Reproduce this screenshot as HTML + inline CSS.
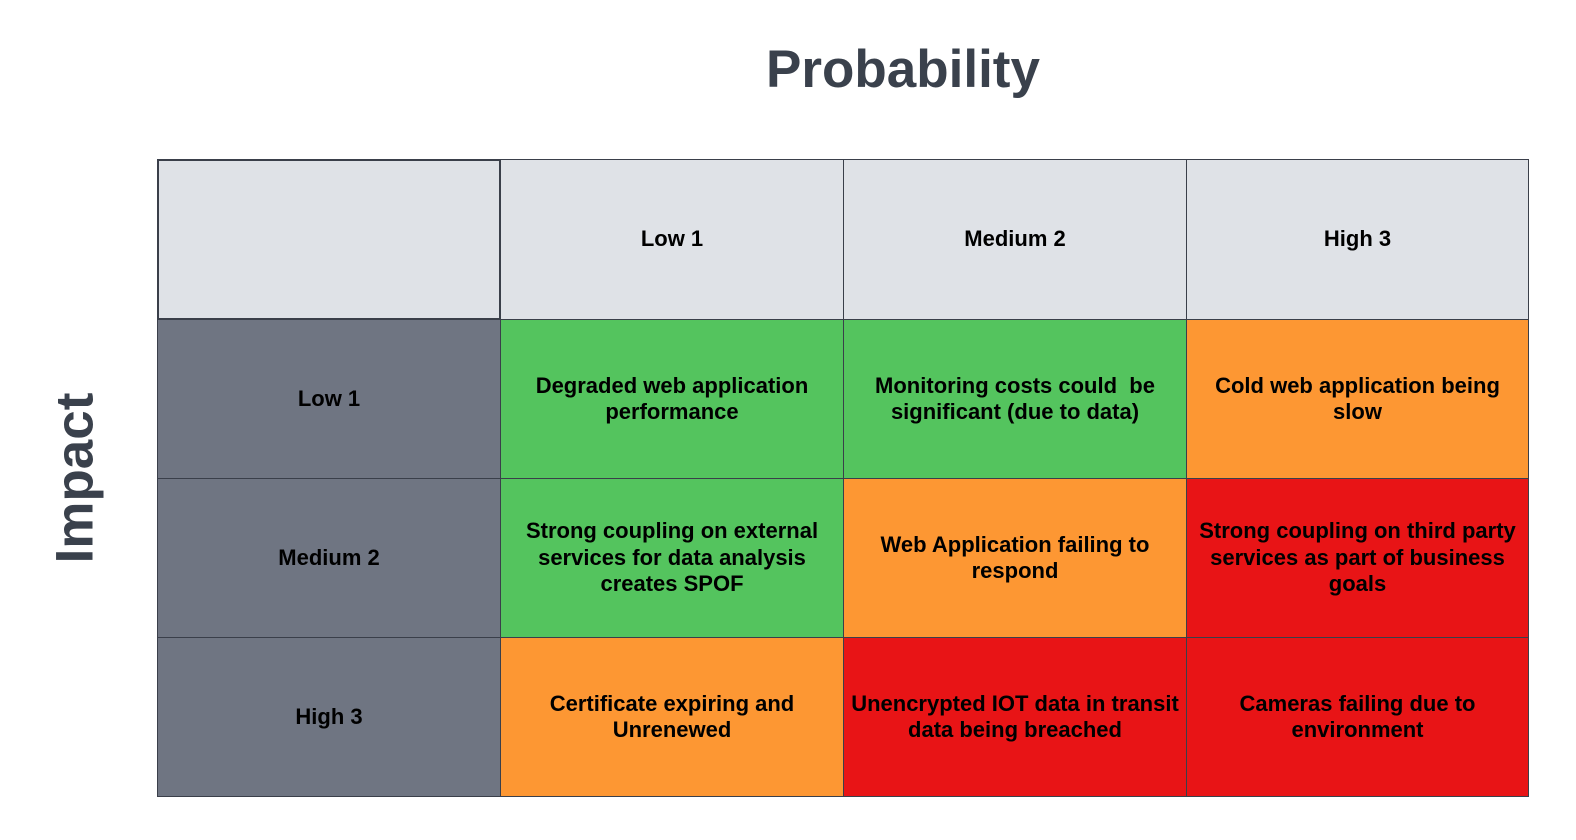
<!DOCTYPE html><html><head><style>
body{margin:0;width:1576px;height:840px;background:#fff;position:relative;overflow:hidden;font-family:"Liberation Sans",sans-serif}
.c{position:absolute;box-sizing:border-box;border:1px solid #3a3f4a;display:flex;align-items:center;justify-content:center;text-align:center;font-weight:bold;font-size:22px;line-height:26.5px;color:#000;padding:0 6px}
.h{background:#dfe2e7}.g{background:#6f7582}.gr{background:#54c45e}.o{background:#fd9733}.r{background:#e81416}
</style></head><body>
<div style="position:absolute;left:0;width:1806px;top:38px;text-align:center;font-weight:bold;font-size:53px;color:#3a414c;line-height:64px">Probability</div>
<div style="position:absolute;left:75px;top:478px;transform:translate(-50%,-50%) rotate(-90deg);font-weight:bold;font-size:53px;color:#3a414c;white-space:nowrap">Impact</div>
<div class="c h" style="left:157px;top:159px;width:344px;height:161px;border:2px solid #3a3f4a"></div>
<div class="c h" style="left:500px;top:159px;width:344px;height:161px">Low 1</div>
<div class="c h" style="left:843px;top:159px;width:344px;height:161px">Medium 2</div>
<div class="c h" style="left:1186px;top:159px;width:343px;height:161px">High 3</div>
<div class="c g" style="left:157px;top:319px;width:344px;height:160px">Low 1</div>
<div class="c gr" style="left:500px;top:319px;width:344px;height:160px">Degraded web application performance</div>
<div class="c gr" style="left:843px;top:319px;width:344px;height:160px">Monitoring costs could&nbsp; be significant (due to data)</div>
<div class="c o" style="left:1186px;top:319px;width:343px;height:160px">Cold web application being slow</div>
<div class="c g" style="left:157px;top:478px;width:344px;height:160px">Medium 2</div>
<div class="c gr" style="left:500px;top:478px;width:344px;height:160px">Strong coupling on external services for data analysis creates SPOF</div>
<div class="c o" style="left:843px;top:478px;width:344px;height:160px">Web Application failing to respond</div>
<div class="c r" style="left:1186px;top:478px;width:343px;height:160px;padding:0 2px">Strong coupling on third party services as part of business goals</div>
<div class="c g" style="left:157px;top:637px;width:344px;height:160px">High 3</div>
<div class="c o" style="left:500px;top:637px;width:344px;height:160px">Certificate expiring and Unrenewed</div>
<div class="c r" style="left:843px;top:637px;width:344px;height:160px;padding:0 2px">Unencrypted IOT data in transit data being breached</div>
<div class="c r" style="left:1186px;top:637px;width:343px;height:160px">Cameras failing due to environment</div>
</body></html>
